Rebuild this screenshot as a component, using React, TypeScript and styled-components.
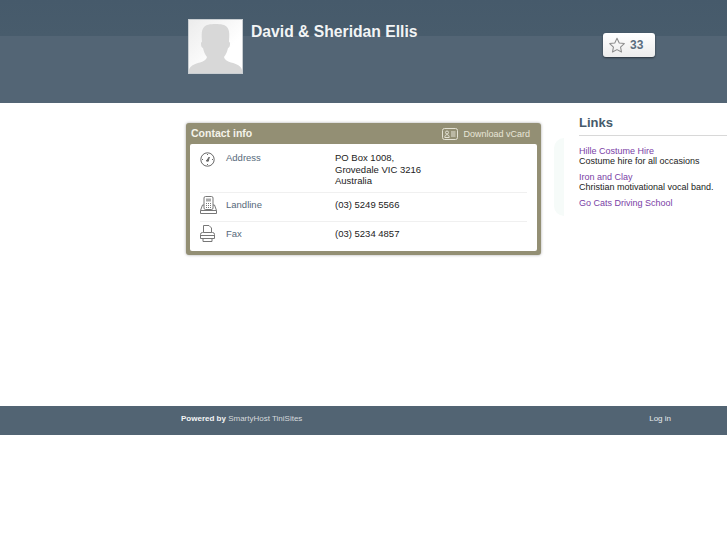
import styled, {createGlobalStyle} from "styled-components";

const GlobalStyle = createGlobalStyle`
    html, body {
        margin: 0;
        padding: 0;
        background: #fff;
        font-family: "Liberation Sans", Arial, sans-serif;
    }
`;

export default function App() {
    return (
        <Page>
            <GlobalStyle/>
            <Header>
                <Avatar><AvatarIcon/></Avatar>
                <Title>David &amp; Sheridan Ellis</Title>
                <Favourite>
                    <StarIcon/>
                    <FavouriteCount>33</FavouriteCount>
                </Favourite>
            </Header>
            <Main>
                <ContactColumn>
                    <ContactCard>
                        <CardHead>
                            <CardTitle>Contact info</CardTitle>
                            <Download><VCardIcon/>Download vCard</Download>
                        </CardHead>
                        <CardBody>
                            <ContactRow $h={49} $pad={8}>
                                <RowIcon><ClockIcon/></RowIcon>
                                <RowLabel $top={0}>Address</RowLabel>
                                <RowValue $top={0}>PO Box 1008,<br/>Grovedale VIC 3216<br/>Australia</RowValue>
                            </ContactRow>
                            <ContactRow $h={29} $pad={3}>
                                <RowIcon><PhoneIcon/></RowIcon>
                                <RowLabel $top={2.5}>Landline</RowLabel>
                                <RowValue $top={2.5}>(03) 5249 5566</RowValue>
                            </ContactRow>
                            <ContactRow $h={29} $pad={3}>
                                <RowIcon><FaxIcon/></RowIcon>
                                <RowLabel $top={2.5}>Fax</RowLabel>
                                <RowValue $top={2.5}>(03) 5234 4857</RowValue>
                            </ContactRow>
                        </CardBody>
                    </ContactCard>
                </ContactColumn>
                <Sidebar>
                    <SideGlow/>
                    <SideTitle>Links</SideTitle>
                    <LinkItem>
                        <LinkName>Hille Costume Hire</LinkName>
                        <LinkText>Costume hire for all occasions</LinkText>
                    </LinkItem>
                    <LinkItem>
                        <LinkName>Iron and Clay</LinkName>
                        <LinkText>Christian motivational vocal band.</LinkText>
                    </LinkItem>
                    <LinkItem>
                        <LinkName>Go Cats Driving School</LinkName>
                    </LinkItem>
                </Sidebar>
            </Main>
            <Footer>
                <FooterLeft><strong>Powered by</strong> SmartyHost TiniSites</FooterLeft>
                <FooterLink>Log in</FooterLink>
            </Footer>
        </Page>
    );
}

function AvatarIcon() {
    return (
        <svg width="53" height="52" viewBox="0 0 53 52">
            <path fill="#d8d8d8" d="M0 52v-3c1-4 5-6 11-7.500 4-1.200 6.500-3 7-5.500-2-2.500-3.500-6-4-9-1.500-.5-2-2-2-4.500 0-1 .3-1.500 1-1.800-.5-8-.5-11 1.500-14C17 3.500 21 3 26.500 3s9.500.5 12 3.700c2 3 2 6 1.500 14 .7.300 1 .8 1 1.800 0 2.500-.5 4-2 4.500-.5 3-2 6.500-4 9 .5 2.500 3 4.300 7 5.500 6 1.500 10 3.500 11 7.500v3z"/>
        </svg>
    );
}

function StarIcon() {
    return (
        <svg width="16" height="16" viewBox="0 0 18 17" fill="none" stroke="#8d8d8d" strokeWidth="1.200" strokeLinejoin="round">
            <path d="M9 1l2.500 5.200 5.700.7-4.200 3.900 1.100 5.600L9 13.700l-5.100 2.700 1.100-5.600L.800 6.900l5.700-.7z"/>
        </svg>
    );
}

function VCardIcon() {
    return (
        <svg width="16" height="12" viewBox="0 0 16 12" fill="none" stroke="#e4e2d4" strokeWidth="1">
            <rect x=".5" y=".5" width="15" height="11" rx="2"/>
            <circle cx="5" cy="4.500" r="1.500"/>
            <path d="M2.800 9.500c0-2 1-2.800 2.200-2.800s2.200.8 2.200 2.800z"/>
            <path d="M9 4h4.500M9 6h4.500M9 8h4.500"/>
        </svg>
    );
}

function ClockIcon() {
    return (
        <svg width="15" height="15" viewBox="0 0 15 15" fill="none" stroke="#666" strokeWidth="1">
            <circle cx="7.500" cy="7.500" r="6.700"/>
            <path d="M7.500 2v1M7.500 12v1M2 7.500h1M12 7.500h1"/>
            <path d="M6.300 9l3-4-1 4.200z" fill="#666"/>
        </svg>
    );
}

function PhoneIcon() {
    return (
        <svg width="17" height="18" viewBox="0 0 17 18" fill="none" stroke="#777" strokeWidth="1">
            <rect x="4" y=".5" width="9" height="13" rx="1.500"/>
            <rect x="6" y="2.500" width="5" height="3" fill="#aaa" stroke="none"/>
            <path d="M6 7.500h5M6 9.500h5M6 11.500h5" strokeDasharray="1 1"/>
            <path d="M4 9H2.500L.5 14.500v3h16v-3L14.500 9H13M.5 14.500h16"/>
        </svg>
    );
}

function FaxIcon() {
    return (
        <svg width="15" height="17" viewBox="0 0 15 17" fill="none" stroke="#777" strokeWidth="1">
            <path d="M3.500 7.500V.5h5.500l2.500 2.500v4.500"/>
            <path d="M3.500 7.500h-1a2 2 0 0 0-2 2v4h14v-4a2 2 0 0 0-2-2h-1z"/>
            <path d="M3 13.500v3h9v-3M.5 10.500h14"/>
        </svg>
    );
}

const Page = styled.div`
    width: 727px;
    height: 545px;
    overflow: hidden;
    background: #fff;
    display: flex;
    flex-direction: column;
`;

const Header = styled.header`
    height: 103px;
    box-sizing: border-box;
    padding: 19px 72px 0 188px;
    background: linear-gradient(#465a6b 0, #485c6c 36px, #536575 36px, #536575 100%);
    display: flex;
    align-items: flex-start;
`;

const Avatar = styled.div`
    width: 55px;
    height: 55px;
    box-sizing: border-box;
    border: 1px solid #c9ced2;
    background: linear-gradient(135deg, #ececec, #fff 65%);
    display: flex;
    align-items: flex-end;
    justify-content: center;
    overflow: hidden;
`;

const Title = styled.h1`
    margin: 4px 0 0 8px;
    flex: 1;
    font-size: 15.700px;
    line-height: 18px;
    font-weight: bold;
    color: #f2f4f5;
`;

const Favourite = styled.div`
    margin-top: 14px;
    width: 52px;
    height: 24px;
    box-sizing: border-box;
    padding-left: 6px;
    background: linear-gradient(#fff, #ececec);
    border-radius: 3px;
    box-shadow: 0 1px 2px rgba(0, 0, 0, .5);
    display: flex;
    align-items: center;
    gap: 5px;
`;

const FavouriteCount = styled.span`
    font-size: 12px;
    font-weight: bold;
    color: #5a6d7e;
`;

const Main = styled.main`
    height: 303px;
    display: flex;
    align-items: flex-start;
`;

const ContactColumn = styled.div`
    width: 579px;
    flex: none;
    box-sizing: border-box;
    padding: 20px 0 0 186px;
`;

const ContactCard = styled.section`
    width: 355px;
    height: 132px;
    box-sizing: border-box;
    padding: 0 4px 4px;
    background: #938f74;
    border-radius: 3px;
    box-shadow: 0 0 3px rgba(0, 0, 0, .35);
    display: flex;
    flex-direction: column;
`;

const CardHead = styled.div`
    height: 21px;
    flex: none;
    padding: 0 7px 0 1px;
    display: flex;
    align-items: center;
    justify-content: space-between;
`;

const CardTitle = styled.h2`
    margin: 0 0 2px;
    font-size: 10.500px;
    font-weight: bold;
    color: #f4f3ea;
`;

const Download = styled.a`
    font-size: 9px;
    color: #e8e6d8;
    display: flex;
    align-items: center;
    gap: 5px;
`;

const CardBody = styled.div`
    flex: 1;
    box-sizing: border-box;
    padding: 0 10px;
    background: #fff;
    border-radius: 2px;
`;

const ContactRow = styled.div<{$h: number; $pad: number}>`
    height: ${p => p.$h}px;
    box-sizing: border-box;
    padding-top: ${p => p.$pad}px;
    border-bottom: 1px solid #f0f0f0;
    display: flex;
    align-items: flex-start;
    &:last-child { border-bottom: none; }
`;

const RowIcon = styled.div`
    width: 26px;
    flex: none;
    display: flex;
`;

const RowLabel = styled.div<{$top: number}>`
    width: 109px;
    flex: none;
    margin-top: ${p => p.$top}px;
    font-size: 9.500px;
    line-height: 11.500px;
    color: #56697a;
`;

const RowValue = styled.div<{$top: number}>`
    margin-top: ${p => p.$top}px;
    font-size: 9.500px;
    line-height: 11.500px;
    color: #222;
`;

const Sidebar = styled.aside`
    position: relative;
    flex: 1;
    padding-top: 12px;
`;

const SideGlow = styled.div`
    position: absolute;
    left: -25px;
    top: 35px;
    width: 10px;
    height: 78px;
    border-radius: 10px 0 0 10px;
    background: #f6fbf9;
`;

const SideTitle = styled.h3`
    margin: 0 0 10px;
    padding-bottom: 5px;
    font-size: 13px;
    line-height: 15px;
    font-weight: bold;
    color: #465a6b;
    border-bottom: 1px solid #d8d8d8;
`;

const LinkItem = styled.div`
    margin-bottom: 6px;
`;

const LinkName = styled.a`
    display: block;
    font-size: 9px;
    line-height: 10px;
    color: #7a3ea6;
`;

const LinkText = styled.div`
    font-size: 9px;
    line-height: 10px;
    color: #222;
`;

const Footer = styled.footer`
    height: 29px;
    box-sizing: border-box;
    padding: 0 56px 4px 181px;
    background: #526473;
    font-size: 8px;
    color: #d6d9dc;
    display: flex;
    align-items: center;
    justify-content: space-between;
    strong { color: #f2f4f5; }
`;

const FooterLeft = styled.div``;

const FooterLink = styled.a`
    color: #e6eaec;
`;
